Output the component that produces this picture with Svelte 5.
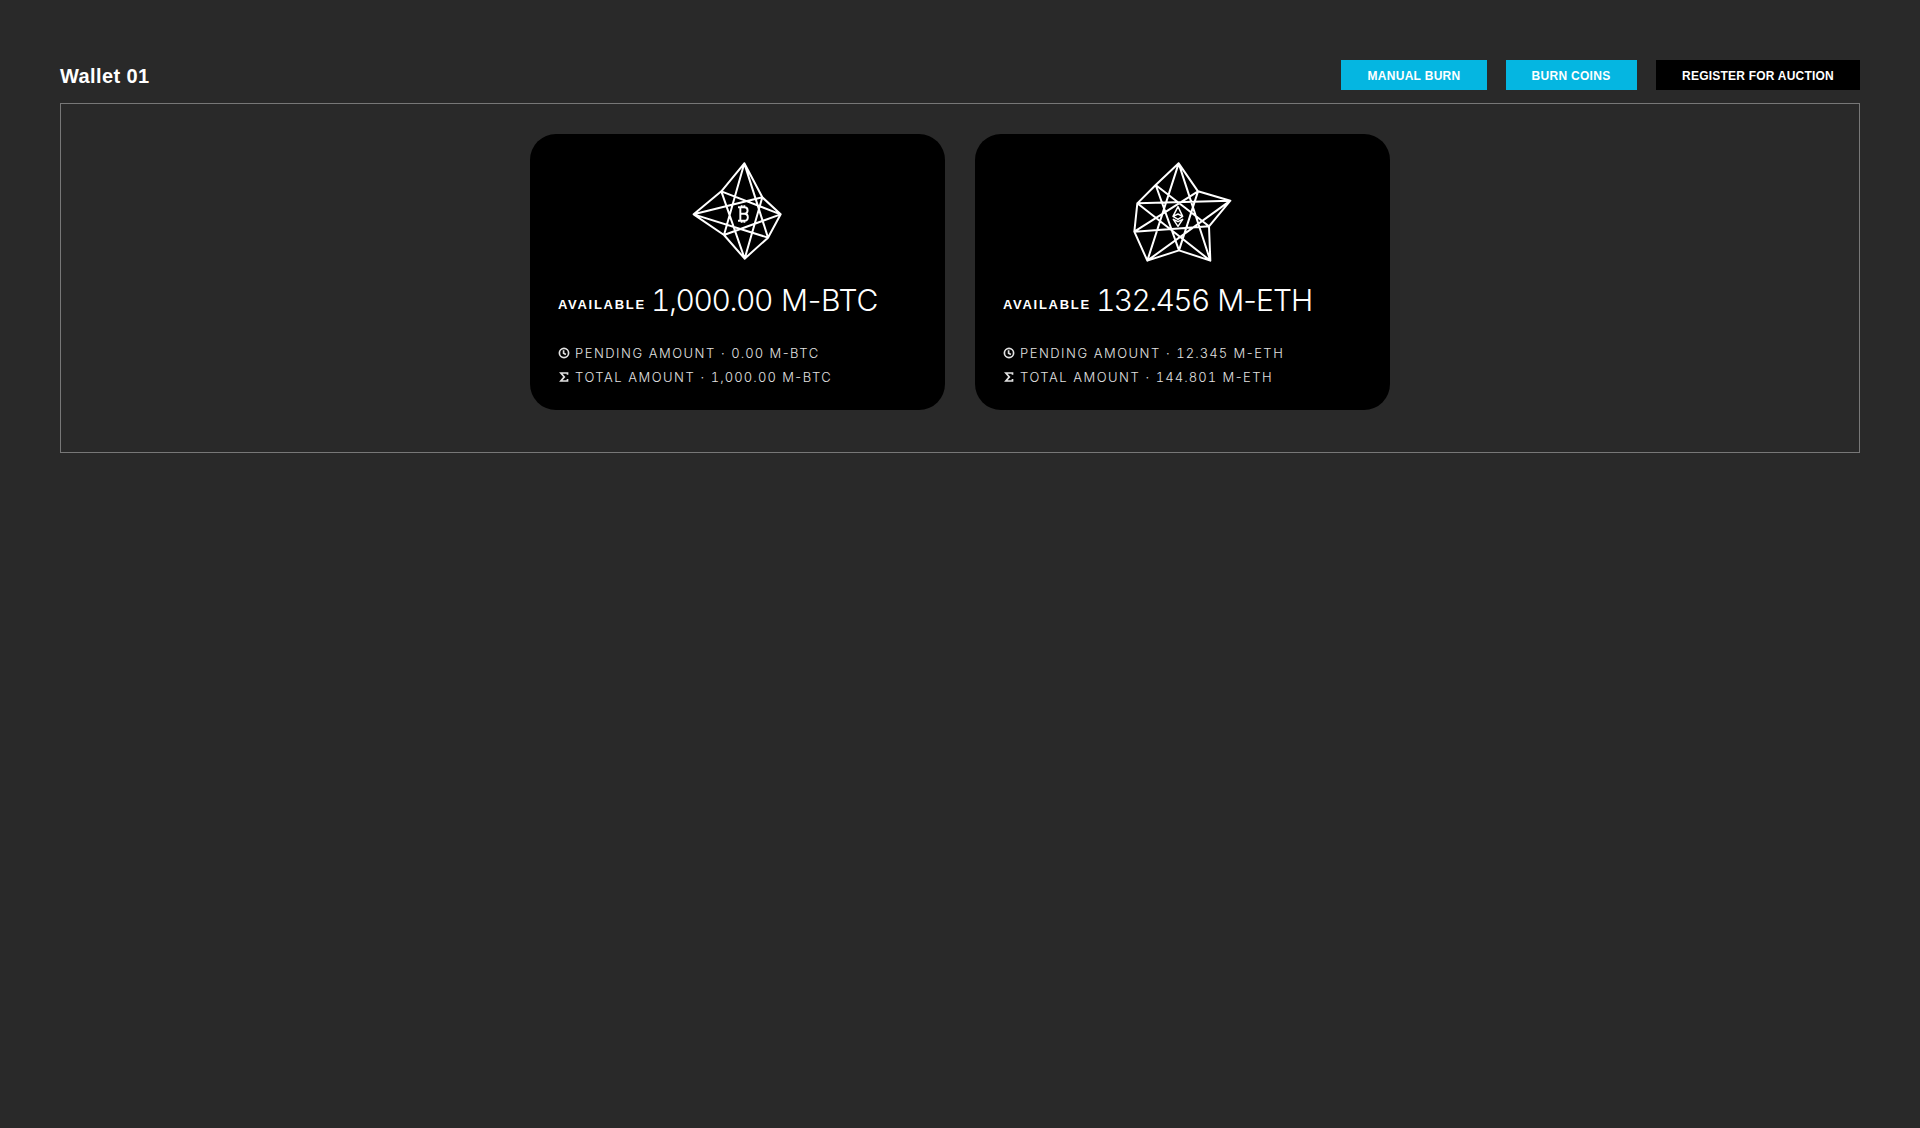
<script>
  const actions = [
    { label: 'MANUAL BURN', kind: 'manual' },
    { label: 'BURN COINS', kind: 'coins' },
    { label: 'REGISTER FOR AUCTION', kind: 'register' }
  ];
  const cards = [
    { id: 'btc', unit: 'M-BTC', available: '1,000.00', pending: '0.00', total: '1,000.00' },
    { id: 'eth', unit: 'M-ETH', available: '132.456', pending: '12.345', total: '144.801' }
  ];
</script>

<main>
  <header>
    <h1>Wallet 01</h1>
    <nav>
      {#each actions as action}
        <button class={action.kind}>{action.label}</button>
      {/each}
    </nav>
  </header>

  <section class="frame">
    {#each cards as card}
      <article class={card.id}>
        {#if card.id === 'btc'}
          <svg class="emblem" viewBox="24 30 300 300" aria-hidden="true">
            <path d="M193 40L124 124L41 193L132 255L194 326L264 263L302 193L247 142ZM132 255L193 40L264 263L41 193L247 142L194 326L124 124L302 193Z" />
            <path class="coin" d="M174 172H193C206 172 206 191 193 191H182M193 191C207 191 207 212 193 212H174M181 172V212M185 166V172M193 166V172M185 212V218M193 212V218" />
          </svg>
        {:else}
          <svg class="emblem" viewBox="39 30 300 300" aria-hidden="true">
            <path d="M176 40L107 105L52 160L43 245L82 332L177 301L271 332L267 229L331 152L234 124ZM176 40L82 332L331 152L52 160L271 332ZM107 105L177 301L234 124L43 245L267 229Z" />
            <path class="ether" d="M174 170L188 199L174 208L159 199ZM159 199L174 192L188 199M160 208L174 229L188 208L174 215Z" />
          </svg>
        {/if}
        <p class="available">
          <span class="tag">AVAILABLE</span>
          <span class="sum"><span class="num">{card.available}</span> {card.unit}</span>
        </p>
        <p class="line">
          <svg viewBox="0 0 12 12" aria-hidden="true"><circle cx="6" cy="6" r="4.6" /><path d="M5.6 3.2V6.3L7.9 7.6" /></svg>
          <span>PENDING AMOUNT · <span class="num">{card.pending}</span> {card.unit}</span>
        </p>
        <p class="line">
          <svg viewBox="0 0 12 12" aria-hidden="true"><path d="M9.5 3.8V2H2.9L6.3 5.9L2.9 10H9.5V8.1" /></svg>
          <span>TOTAL AMOUNT · <span class="num">{card.total}</span> {card.unit}</span>
        </p>
      </article>
    {/each}
  </section>
</main>

<style>
  :global(body) { margin: 0; background: #292929; }
  main {
    box-sizing: border-box;
    min-height: 1128px;
    padding: 60px;
    color: #fff;
    font-family: "Liberation Sans", Arial, sans-serif;
  }
  header { display: flex; justify-content: space-between; height: 43px; }
  h1 { margin: 4px 0 0; font-size: 20px; line-height: 24px; font-weight: 700; letter-spacing: 0.4px; white-space: nowrap; }
  nav { display: flex; gap: 19px; height: 30px; }
  button {
    border: 0;
    padding: 2px 0 0;
    color: #fff;
    background: #05b6e1;
    font: 700 12px/28px "Liberation Sans", Arial, sans-serif;
    white-space: nowrap;
  }
  .manual { width: 146px; letter-spacing: 0.3px; }
  .coins { width: 131px; padding-right: 1px; letter-spacing: 0.3px; }
  .register { width: 204px; background: #000; letter-spacing: 0.22px; }
  .frame {
    box-sizing: border-box;
    display: flex;
    justify-content: center;
    align-items: flex-start;
    gap: 30px;
    height: 350px;
    padding-top: 30px;
    border: 1px solid #777;
  }
  article {
    box-sizing: border-box;
    width: 415px;
    height: 276px;
    padding: 26px 28px 0;
    border-radius: 26px;
    background: #000;
  }
  .emblem {
    display: block;
    width: 100px;
    height: 100px;
    margin: 0 auto;
    overflow: visible;
    fill: none;
    stroke: #fff;
    stroke-width: 6;
    stroke-linejoin: round;
  }
  .emblem .coin { stroke-width: 5.8; }
  .emblem .ether { stroke-width: 4.4; }
  p { display: flex; margin: 0; white-space: nowrap; }
  .num { font-kerning: none; font-variant-numeric: tabular-nums; }
  .available { align-items: flex-start; height: 40px; margin-top: 20px; }
  .tag { width: 94px; margin-top: 2px; font-size: 13px; line-height: 46px; font-weight: 700; letter-spacing: 1.7px; }
  .sum { margin-left: -1px; font: 300 30px/40px Inter, "Liberation Sans", sans-serif; letter-spacing: -0.3px; word-spacing: 1px; }
  .sum .num { letter-spacing: -1.45px; }
  .eth .sum { letter-spacing: -0.9px; }
  .eth .sum .num { letter-spacing: -1.7px; }
  .line { align-items: center; height: 24px; color: #e2e2e2; font: 300 13px/24px Inter, "Liberation Sans", sans-serif; letter-spacing: 1.5px; }
  .line .num { letter-spacing: 1.1px; }
  .available + .line { margin-top: 21px; }
  .line svg { width: 12px; height: 12px; margin-right: 5px; fill: none; stroke: #e2e2e2; stroke-width: 1.7; }
</style>
